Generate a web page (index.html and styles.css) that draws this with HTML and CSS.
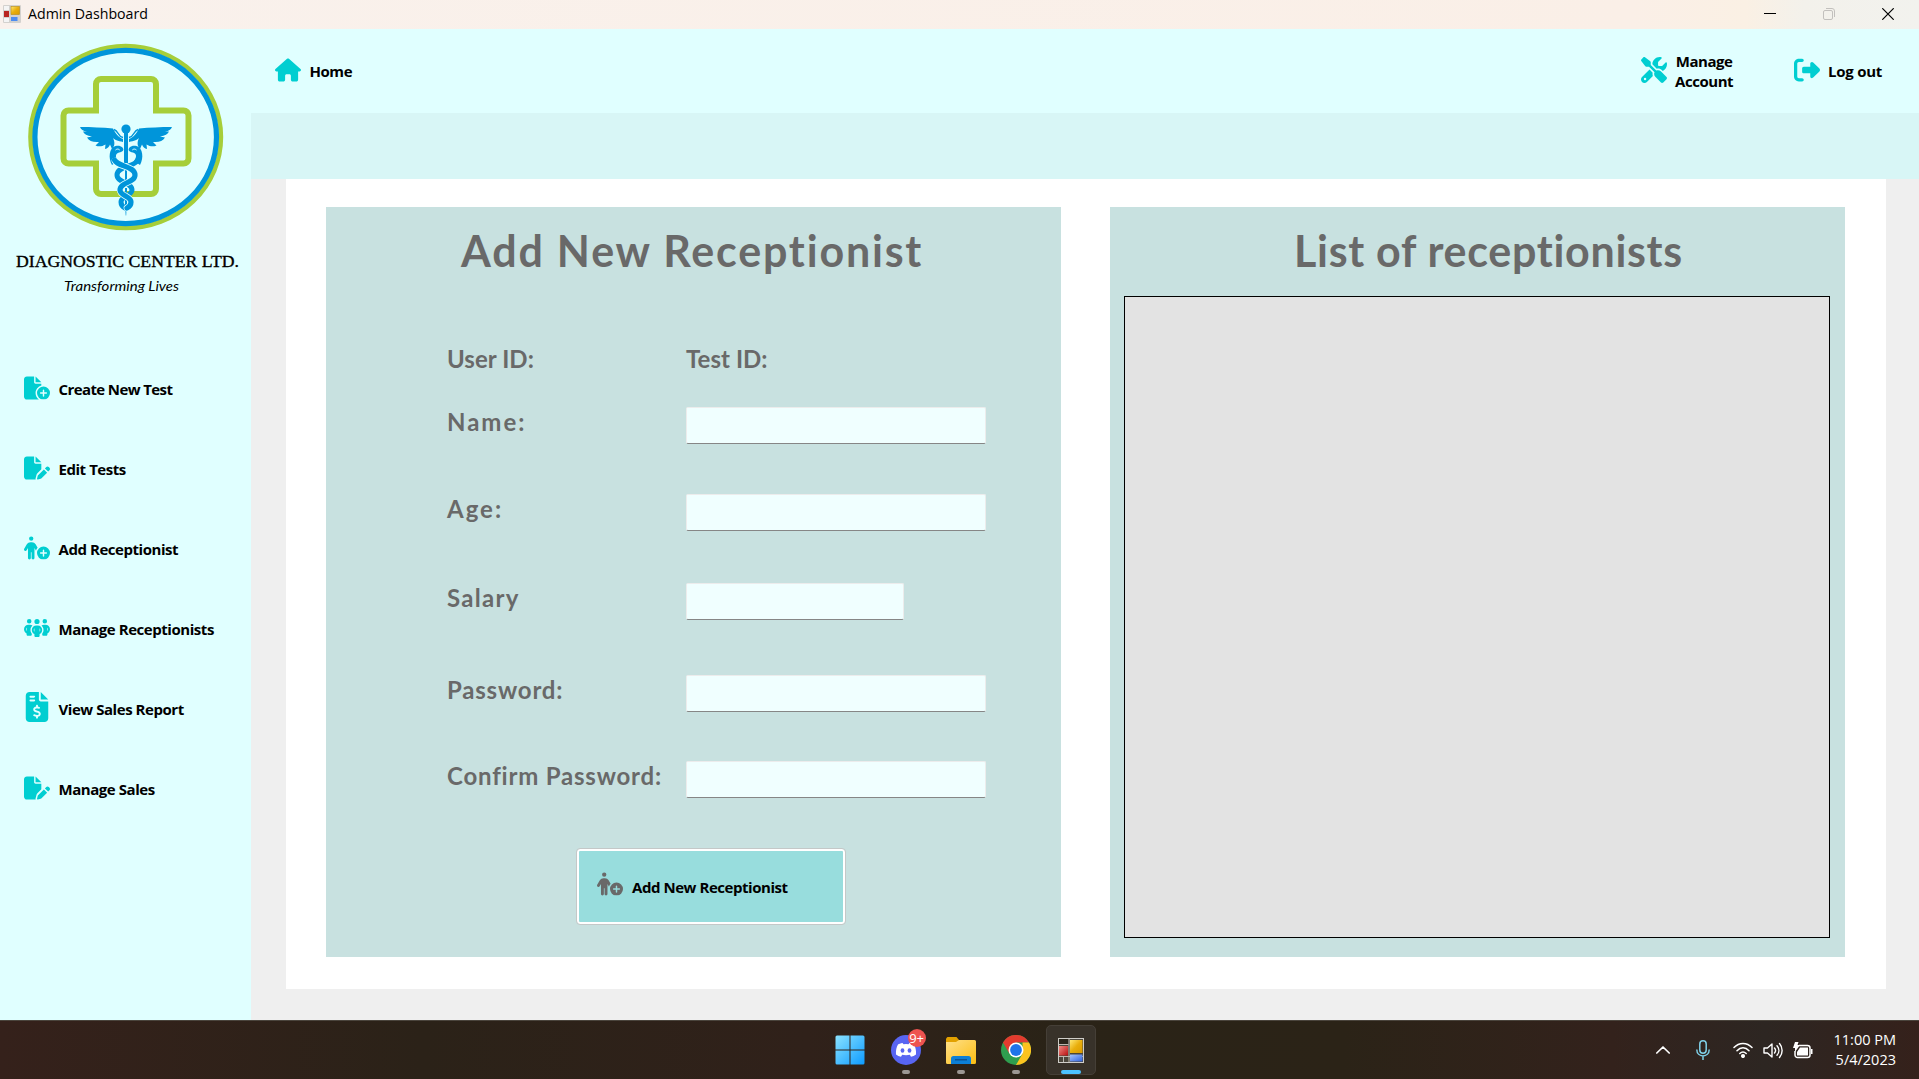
FILE: index.html
```html
<!DOCTYPE html>
<html lang="en">
<head>
<meta charset="utf-8">
<title>Admin Dashboard</title>
<link rel="stylesheet" href="styles.css">
</head>
<body>
<svg class="defs" width="0" height="0">
  <defs>
    <symbol id="i-plus-badge" viewBox="0 0 576 512"><path d="M432 224a144 144 0 1 1 0 288 144 144 0 1 1 0-288zm16 80c0-8.8-7.2-16-16-16s-16 7.2-16 16v48H368c-8.8 0-16 7.2-16 16s7.2 16 16 16h48v48c0 8.8 7.2 16 16 16s16-7.2 16-16V384h48c8.8 0 16-7.2 16-16s-7.2-16-16-16H448V304z"/></symbol>
    <symbol id="i-file-plus" viewBox="0 0 576 512"><path d="M0 64C0 28.7 28.7 0 64 0H224V128c0 17.7 14.3 32 32 32H384v38.6C310.1 219.5 256 287.4 256 368c0 59.1 29.1 111.3 73.7 143.3c-3.2 .5-6.4 .7-9.7 .7H64c-35.3 0-64-28.7-64-64V64zm384 64H256V0L384 128z"/><use href="#i-plus-badge" width="576" height="512"/></symbol>
    <symbol id="i-file-pen" viewBox="0 0 576 512"><path d="M0 64C0 28.7 28.7 0 64 0H224V128c0 17.7 14.3 32 32 32H384V285.7l-86.8 86.8c-10.3 10.3-17.5 23.1-21 37.2l-18.7 74.9c-2.3 9.2-1.8 18.8 1.3 27.5H64c-35.3 0-64-28.7-64-64V64zm384 64H256V0L384 128zM549.8 235.7l14.4 14.4c15.6 15.6 15.6 40.9 0 56.6l-29.4 29.4-71-71 29.4-29.4c15.6-15.6 40.9-15.6 56.6 0zM311.9 417L441.1 287.8l71 71L382.9 487.9c-4.1 4.1-9.2 7-14.9 8.4l-60.1 15c-5.5 1.4-11.2-.2-15.2-4.2s-5.6-9.7-4.2-15.2l15-60.1c1.4-5.6 4.3-10.8 8.4-14.9z"/></symbol>
    <symbol id="i-person-plus" viewBox="0 0 576 512"><path d="M112 48a48 48 0 1 1 96 0 48 48 0 1 1 -96 0zm40 304V480c0 17.7-14.3 32-32 32s-32-14.3-32-32V256.9L59.4 304.5c-9.1 15.1-28.8 20-43.9 10.9s-20-28.8-10.9-43.9l58.3-97c17.4-28.9 48.6-46.6 82.3-46.6h29.7c33.7 0 64.9 17.7 82.3 46.6l44.9 74.7c-16.1 17.6-28.6 38.5-36.6 61.5c-1.9-1.8-3.5-3.9-4.9-6.3L232 256.9V480c0 17.7-14.3 32-32 32s-32-14.3-32-32V352H152z"/><use href="#i-plus-badge" width="576" height="512"/></symbol>
    <symbol id="i-people" viewBox="0 0 640 512"><path d="M72 88a56 56 0 1 1 112 0 56 56 0 1 1 -112 0zM64 245.700C54 256.900 48 271.800 48 288s6 31.100 16 42.300V245.700zm144.400-49.300C178.700 222.700 160 261.200 160 304c0 34.300 12 65.800 32 90.500V416c0 17.700-14.300 32-32 32H96c-17.700 0-32-14.300-32-32V389.200C26.200 371.200 0 332.700 0 288c0-61.900 50.100-112 112-112h32c24 0 46.200 7.500 64.400 20.300zM448 416V394.500c20-24.700 32-56.200 32-90.500c0-42.800-18.700-81.300-48.400-107.700C449.800 183.500 472 176 496 176h32c61.900 0 112 50.100 112 112c0 44.700-26.200 83.200-64 101.200V416c0 17.700-14.300 32-32 32H480c-17.700 0-32-14.300-32-32zm8-328a56 56 0 1 1 112 0 56 56 0 1 1 -112 0zM576 245.700v84.700c10-11.300 16-26.100 16-42.300s-6-31.100-16-42.300zM320 32a64 64 0 1 1 0 128 64 64 0 1 1 0-128zM240 304c0 16.200 6 31 16 42.300V261.700c-10 11.300-16 26.100-16 42.300zm144-42.300v84.700c10-11.300 16-26.100 16-42.300s-6-31.100-16-42.300zM448 304c0 44.700-26.200 83.200-64 101.200V448c0 17.700-14.300 32-32 32H288c-17.700 0-32-14.300-32-32V405.200c-37.800-18-64-56.500-64-101.200c0-61.900 50.100-112 112-112h32c61.900 0 112 50.100 112 112z"/></symbol>
    <symbol id="i-invoice" viewBox="0 0 384 512"><path d="M64 0C28.700 0 0 28.700 0 64V448c0 35.300 28.700 64 64 64H320c35.300 0 64-28.700 64-64V160H256c-17.700 0-32-14.300-32-32V0H64zM256 0V128H384L256 0zM64 80c0-8.800 7.200-16 16-16h64c8.800 0 16 7.200 16 16s-7.200 16-16 16H80c-8.800 0-16-7.200-16-16zm0 64c0-8.800 7.200-16 16-16h64c8.800 0 16 7.200 16 16s-7.200 16-16 16H80c-8.800 0-16-7.200-16-16zm128 72c8.800 0 16 7.200 16 16v17.300c8.500 1.200 16.700 3.100 24.100 5.100c8.500 2.300 13.600 11 11.300 19.600s-11 13.600-19.600 11.300c-11.100-3-22-5.200-32.100-5.300c-8.400-.1-17.400 1.800-23.600 5.500c-5.700 3.400-8.100 7.300-8.100 12.800c0 3.700 1.300 6.500 7.300 10.100c6.900 4.100 16.600 7.100 29.200 10.900l.5 .1c11.300 3.400 25.300 7.600 36.300 14.600c12.100 7.600 22.400 19.700 22.700 38.200c.3 19.300-9.600 33.300-22.900 41.600c-7.700 4.800-16.400 7.600-25.100 9.100V440c0 8.800-7.200 16-16 16s-16-7.200-16-16V422.200c-11.200-2.100-21.700-5.700-30.900-8.900c-2.100-.7-4.200-1.400-6.200-2.100c-8.400-2.800-12.900-11.900-10.100-20.200s11.900-12.900 20.200-10.100c2.500 .8 4.800 1.600 7.100 2.400c13.600 4.600 24.600 8.400 36.300 8.700c9.100 .3 17.900-1.700 23.700-5.300c5.100-3.200 7.900-7.300 7.800-14c-.1-4.600-1.800-7.800-7.700-11.600c-6.800-4.300-16.500-7.400-29-11.200l-1.600-.5c-11-3.300-24.300-7.300-34.800-13.700c-12-7.200-22.600-18.900-22.700-37.300c-.1-19.400 10.800-32.800 23.800-40.500c7.500-4.400 15.800-7.200 24.100-8.700V232c0-8.800 7.200-16 16-16z"/></symbol>
    <symbol id="i-home" viewBox="0 0 576 512"><path d="M575.8 255.5c0 18-15 32.100-32 32.100h-32l.7 160.200c0 2.700-.2 5.400-.5 8.100V472c0 22.100-17.900 40-40 40H392c-22.100 0-40-17.900-40-40V384c0-17.700-14.300-32-32-32H256c-17.700 0-32 14.300-32 32v88c0 22.100-17.900 40-40 40H104c-22.100 0-40-17.900-40-40V287.600H32c-18 0-32-14-32-32.100c0-9 3-17 10-24L266.400 8c7-7 15-8 22-8s15 2 21 7L564.800 231.500c8 7 12 15 11 24z"/></symbol>
    <symbol id="i-tools" viewBox="0 0 512 512"><path d="M78.600 5C69.100-2.400 55.600-1.500 47 7L7 47c-8.500 8.500-9.400 22-2.100 31.600l80 104c4.500 5.900 11.600 9.400 19 9.400h54.100l109 109c-14.700 29-10 65.400 14.300 89.600l112 112c12.500 12.500 32.800 12.500 45.300 0l64-64c12.500-12.500 12.500-32.800 0-45.300l-112-112c-24.200-24.200-60.600-29-89.600-14.300l-109-109V104c0-7.500-3.500-14.500-9.400-19L78.600 5zM19.900 396.100C7.200 408.800 0 426.100 0 444.100C0 481.600 30.400 512 67.900 512c18 0 35.300-7.200 48-19.900L233.700 374.300c-7.800-20.900-9-43.600-3.600-65.100l-61.700-61.700L19.900 396.100zM512 144c0-10.500-1.100-20.700-3.200-30.500c-2.400-11.200-16.100-14.100-24.200-6l-63.900 63.900c-3 3-7.100 4.700-11.300 4.700H352c-8.800 0-16-7.200-16-16V102.600c0-4.200 1.700-8.300 4.700-11.300l63.900-63.900c8.100-8.100 5.200-21.800-6-24.200C388.700 1.100 378.500 0 368 0C288.500 0 224 64.500 224 144l0 .8 85.300 85.300c36-9.100 75.800 .5 104 28.700L429 274.500c49-23 83-72.800 83-130.500zM56 432a24 24 0 1 1 48 0 24 24 0 1 1 -48 0z"/></symbol>
    <symbol id="i-exit" viewBox="0 0 512 512"><path d="M377.900 105.900L500.700 228.700c7.200 7.200 11.300 17.100 11.300 27.300s-4.100 20.100-11.300 27.300L377.900 406.100c-6.400 6.400-15 9.900-24 9.900c-18.700 0-33.900-15.200-33.900-33.900l0-62.100-128 0c-17.700 0-32-14.300-32-32l0-64c0-17.700 14.300-32 32-32l128 0 0-62.100c0-18.700 15.200-33.900 33.900-33.900c9 0 17.600 3.600 24 9.900zM160 96L96 96c-17.700 0-32 14.300-32 32l0 256c0 17.700 14.300 32 32 32l64 0c17.700 0 32 14.300 32 32s-14.300 32-32 32l-64 0c-53 0-96-43-96-96L0 128C0 75 43 32 96 32l64 0c17.700 0 32 14.300 32 32s-14.300 32-32 32z"/></symbol>
    <linearGradient id="g-win" x1="0" y1="0" x2="1" y2="1"><stop offset="0" stop-color="#8be3ff"/><stop offset="1" stop-color="#0d9bff"/></linearGradient>
    <linearGradient id="g-folder" x1="0" y1="0" x2="1" y2="1"><stop offset="0" stop-color="#ffe08a"/><stop offset="1" stop-color="#fbbd12"/></linearGradient>
    <linearGradient id="g-yellow" x1="0" y1="0" x2="1" y2="1"><stop offset="0" stop-color="#ffe873"/><stop offset=".5" stop-color="#e9ae0c"/><stop offset="1" stop-color="#d99a00"/></linearGradient>
    <linearGradient id="g-red" x1="0" y1="0" x2="1" y2="1"><stop offset="0" stop-color="#f08b84"/><stop offset="1" stop-color="#b80f10"/></linearGradient>
    <linearGradient id="g-blue" x1="0" y1="0" x2="1" y2="1"><stop offset="0" stop-color="#a5c3ff"/><stop offset="1" stop-color="#2f62dc"/></linearGradient>
  </defs>
</svg>

<header class="titlebar">
  <svg class="app-icon" viewBox="0 0 18 18"><rect width="18" height="18" rx="1" fill="#d3d1ce"/><rect x="1" y="1" width="5" height="4" fill="#f4f4f4"/><rect x="1" y="13" width="5" height="4" fill="#f4f4f4"/><rect x="8" y="1.500" width="8.500" height="8" fill="url(#g-yellow)" stroke="#b98a10" stroke-width=".6"/><rect x="1" y="6" width="5" height="6" fill="#b8231f"/><rect x="8" y="12" width="6.500" height="4" fill="#4d8cf0"/></svg>
  <span class="title">Admin Dashboard</span>
  <div class="controls">
    <svg width="12" height="12" viewBox="0 0 12 12"><path d="M0 5.500h12" stroke="#000"/></svg>
    <svg width="12" height="12" viewBox="0 0 12 12" fill="none" stroke="#c2c0bd"><rect x=".5" y="2.500" width="9" height="9" rx="1.500"/><path d="M3 .5h6a2.500 2.500 0 0 1 2.500 2.500v6"/></svg>
    <svg width="12" height="12" viewBox="0 0 12 12"><path d="M.3.300l11.400 11.400M11.700.300L.3 11.700" stroke="#000" stroke-width="1.200"/></svg>
  </div>
</header>

<div class="app">
  <aside class="sidebar">
    <svg class="logo" viewBox="0 29 251 275" width="251" height="275">
      <ellipse cx="125.700" cy="137" rx="95.200" ry="91" fill="none" stroke="#a6ce39" stroke-width="4.600"/>
      <ellipse cx="125.700" cy="137" rx="90.800" ry="86.600" fill="none" stroke="#0095da" stroke-width="5.200"/>
      <path d="M96 110.500V84a5 5 0 0 1 5-5h50a5 5 0 0 1 5 5v26.500h27.500a5 5 0 0 1 5 5v43a5 5 0 0 1-5 5H156V189a5 5 0 0 1-5 5h-50a5 5 0 0 1-5-5v-25.500H68.500a5 5 0 0 1-5-5v-43a5 5 0 0 1 5-5z" fill="none" stroke="#a6ce39" stroke-width="6"/>
      <defs>
        <g id="wing">
          <path fill="#0095da" d="M80 127C92 127 102 127.500 113 128.500C116 134 118 137 123 139V142C118 141 114 139.500 113 138C115 142 115 146 112 149L110 144.500C109 147 107.500 148.500 105 149L105.500 144.500C102 146.500 99 147 95.500 145.500L99 142C93 142.500 89 141 87 137.500L92 136.500C87 136 84 134 83 131.500H87C83 131 81 129.500 80 127Z"/>
          <path d="M114 129.500C119 131 117 136 123 137.500" fill="none" stroke="#0095da" stroke-width="1.500"/>
        </g>
        <g id="snake-head">
          <path d="M115.500 146C109 148 108 158 112 165L118 161C114.500 156 116 153.500 119 152.500C123 152 124.500 150 122.500 147.500C120.500 145.500 118 145.300 115.500 146Z" fill="#0095da"/>
          <path d="M115.500 150c1.500-1.300 3-1.200 4.200 0" stroke="#e0ffff" fill="none"/>
        </g>
      </defs>
      <use href="#wing"/>
      <use href="#wing" transform="translate(252 0) scale(-1 1)"/>
      <rect x="124" y="133" width="4" height="30" fill="#0095da"/>
      <path d="M125 170h2v12h-2zM125 188h2v7h-2zM125 199h2v7h-2zM125.300 209h1.200l-.3 6.500h-.5z" fill="#0095da"/>
      <circle cx="126" cy="129" r="4.600" fill="#0095da"/>
      <use href="#snake-head"/>
      <use href="#snake-head" transform="translate(252 0) scale(-1 1)"/>
      <g fill="none" stroke-linecap="round">
        <path d="M137 161C134 167 117 166 117 175C117 183 132 182 132 190C132 196 121 196 121 202Q121 206 125 208" stroke="#0095da" stroke-width="5"/>
        <path d="M115 161C118 167 135 166 135 175C135 183 120 182 120 190C120 196 131 196 131 202Q131 206 127 208" stroke="#e0ffff" stroke-width="6.600"/>
        <path d="M114.500 160C118 167 135 166 135 175C135 183 120 182 120 190C120 196 131 196 131 202Q131 206 127 208" stroke="#0095da" stroke-width="5.200"/>
      </g>
      <text class="brand" x="16" y="267" textLength="223" lengthAdjust="spacingAndGlyphs">DIAGNOSTIC CENTER LTD.</text>
      <text class="tagline" x="64" y="291" textLength="115" lengthAdjust="spacingAndGlyphs">Transforming Lives</text>
    </svg>
    <nav class="menu">
      <a class="item create"><svg class="icon"><use href="#i-file-plus"/></svg>Create New Test</a>
      <a class="item"><svg class="icon"><use href="#i-file-pen"/></svg>Edit Tests</a>
      <a class="item"><svg class="icon"><use href="#i-person-plus"/></svg>Add Receptionist</a>
      <a class="item"><svg class="icon"><use href="#i-people"/></svg>Manage Receptionists</a>
      <a class="item"><svg class="icon tall"><use href="#i-invoice"/></svg>View Sales Report</a>
      <a class="item"><svg class="icon"><use href="#i-file-pen"/></svg>Manage Sales</a>
    </nav>
  </aside>

  <div class="main">
    <div class="topbar">
      <a class="link home"><svg class="icon"><use href="#i-home"/></svg>Home</a>
      <a class="link account"><svg class="icon"><use href="#i-tools"/></svg><span>Manage<br>Account</span></a>
      <a class="link logout"><svg class="icon"><use href="#i-exit"/></svg>Log out</a>
    </div>
    <div class="subbar"></div>
    <main class="panel">
      <section class="card">
        <h1 class="h-add">Add New Receptionist</h1>
        <form class="form">
          <div class="row ids"><label>User ID:</label><label>Test ID:</label></div>
          <div class="row name"><label>Name:</label><input></div>
          <div class="row age"><label>Age:</label><input></div>
          <div class="row salary"><label>Salary</label><input></div>
          <div class="row pass"><label>Password:</label><input></div>
          <div class="row confirm"><label>Confirm Password:</label><input></div>
          <button type="button" class="submit"><svg class="icon"><use href="#i-person-plus"/></svg>Add New Receptionist</button>
        </form>
      </section>
      <section class="card list">
        <h1 class="h-list">List of receptionists</h1>
        <div class="table"></div>
      </section>
    </main>
  </div>
</div>

<footer class="taskbar">
  <div class="apps">
    <div class="task"><svg width="30" height="30" viewBox="0 0 30 30"><path fill="url(#g-win)" d="M2 .500h12.500v14H.500V2A1.500 1.500 0 0 1 2 .500zM15.500.500H28A1.500 1.500 0 0 1 29.500 2v12.500h-14zM.500 15.500h14v14H2A1.500 1.500 0 0 1 .500 28zM15.500 15.500h14V28a1.500 1.500 0 0 1-1.500 1.500H15.500z"/></svg></div>
    <div class="task running"><svg width="30" height="30" viewBox="0 0 30 30"><circle cx="15" cy="15" r="15" fill="#5865f2"/><path fill="#fff" d="M11.500 8l1 1.200a18 18 0 0 1 5 0l1-1.200c2 .3 3.500.900 4.500 1.500 1.500 2.500 2.300 6 2 10a14 14 0 0 1-5 2.300l-1.200-2c-2 .500-5.500.500-7.600 0l-1.200 2a14 14 0 0 1-5-2.300c-.3-4 .5-7.500 2-10 1-.6 2.500-1.200 4.500-1.500z"/><ellipse cx="11.500" cy="15.500" rx="1.900" ry="2.200" fill="#5865f2"/><ellipse cx="18.500" cy="15.500" rx="1.900" ry="2.200" fill="#5865f2"/></svg><span class="badge">9+</span></div>
    <div class="task running"><svg width="30" height="30" viewBox="0 0 30 30"><path fill="#e2a100" d="M1.500 2h9l2.500 3v3H0V3.500z"/><path fill="url(#g-folder)" d="M0 7h10l3-2h15.500A1.500 1.500 0 0 1 30 6.500v21a1.500 1.500 0 0 1-1.500 1.500h-27A1.500 1.500 0 0 1 0 27.500z"/><path fill="#0c7fd6" d="M5 29v-5.500A2.500 2.500 0 0 1 7.500 21h15a2.500 2.500 0 0 1 2.500 2.500V29z"/><path d="M9 24.800h12" stroke="#0a4a86" stroke-width="1.200"/></svg></div>
    <div class="task running"><svg width="30" height="30" viewBox="0 0 30 30"><circle cx="15" cy="15" r="15" fill="#2f9e4f"/><path fill="#e33b2e" d="M2 7.500A15 15 0 0 1 28 7.500H15L8.500 18.700z"/><path fill="#fcc31e" d="M28 7.500A15 15 0 0 1 15 30l6.500-11.200L21.500 7.500z"/><circle cx="15" cy="15" r="7.500" fill="#fff"/><circle cx="15" cy="15" r="5.900" fill="#1f74ea"/></svg></div>
    <div class="task active"><svg width="26" height="25" viewBox="0 0 26 25"><rect x=".5" y=".5" width="25" height="24" fill="#4a463c" stroke="#cfcdc8"/><rect x="1" y="1" width="9.500" height="5" fill="#29251b"/><path d="M1 6.500h9.500M1 18.500h24M11 1v23M5.500 18.500V24" stroke="#bbb8b0"/><rect x="12" y="2" width="12.500" height="13" fill="url(#g-yellow)"/><rect x="1" y="8" width="9" height="9.500" fill="url(#g-red)"/><rect x="12" y="16.500" width="12.500" height="7" fill="url(#g-blue)"/></svg></div>
  </div>
  <div class="tray">
    <svg class="chev" width="14" height="8" viewBox="0 0 14 8" fill="none" stroke="#fff" stroke-width="1.700"><path d="M.8 7L7 1l6.200 6" stroke-linecap="round" stroke-linejoin="round"/></svg>
    <svg class="mic" width="14" height="20" viewBox="0 0 14 20" fill="none" stroke="#7fd0e8" stroke-width="1.500"><rect x="3.800" y=".8" width="6.400" height="12.500" rx="3.200"/><path d="M.8 9.500c0 8.500 12.400 8.500 12.400 0M7 16v4"/></svg>
    <svg class="wifi" width="20" height="16" viewBox="0 0 20 16" fill="none" stroke="#fff" stroke-width="1.500" stroke-linecap="round"><path d="M1 5.500c5-5.500 13-5.500 18 0M4 8.700c3.500-3.800 8.500-3.800 12 0M6.800 11.500c2-2 4.400-2 6.400 0"/><circle cx="10" cy="14" r="1.300" fill="#fff"/></svg>
    <svg class="vol" width="20" height="17" viewBox="0 0 20 17" fill="none" stroke="#fff" stroke-width="1.400" stroke-linecap="round" stroke-linejoin="round"><path d="M1 6h3.500L9 2v13l-4.500-4H1zM11.500 6c1.300 1.500 1.300 3.500 0 5M14 3.800c2.500 2.800 2.500 6.600 0 9.400M16.500 1.500c3.500 4 3.500 10 0 14"/></svg>
    <svg class="bat" width="20" height="17" viewBox="0 0 20 17"><path d="M6 3.500h8.500a2.500 2.500 0 0 1 2.500 2.500v7a2.500 2.500 0 0 1-2.500 2.500H4.500A2.500 2.500 0 0 1 2 13V9" fill="none" stroke="#fff" stroke-width="1.500"/><path d="M7 5.500h8v8H4V10zM18 7h1.500v5H18zM2 0h3.500l-1 3H7L2 10V6H0z" fill="#fff"/></svg>
    <div class="clock"><span class="time">11:00 PM</span><span class="date">5/4/2023</span></div>
  </div>
</footer>
</body>
</html>
```

FILE: styles.css
```css
* { box-sizing: border-box; }

body {
  margin: 0;
  width: 1919px;
  height: 1079px;
  overflow: hidden;
  display: flex;
  flex-direction: column;
  font-family: "Open Sans", "Noto Sans", sans-serif;
  background: #efefef;
  color: #000;
}

.defs { display: block; position: absolute; }

.titlebar {
  height: 29px;
  display: flex;
  align-items: center;
  padding: 0 25px 0 3px;
  background: linear-gradient(90deg, #f9f1ec 0, #faefe7 85%, #faf0e4 91%, #f3f1eb 94%, #f2f2ee 100%);
}
.app-icon { width: 18px; height: 18px; margin-top: -1px; }
.title { font-size: 14.200px; margin: -1px 0 0 7px; line-height: 28px; }
.controls { margin-left: auto; display: flex; gap: 47px; margin-top: -1px; }

.app { flex: 1; display: flex; min-height: 0; }

.sidebar { width: 251px; background: #e0ffff; }
.logo { display: block; }
.brand { font: 16.500px "Liberation Serif", serif; stroke: #000; stroke-width: .35px; }
.tagline { font: italic 14px "Lato", sans-serif; }

.menu { display: flex; flex-direction: column; margin-top: 45px; }
.item {
  height: 80px;
  display: flex;
  align-items: center;
  gap: 9px;
  padding-left: 23.500px;
}
.item, .link, .submit {
  font-size: 15px;
  font-weight: 700;
  letter-spacing: -0.450px;
  line-height: 20px;
  white-space: nowrap;
}
.item.create { letter-spacing: -0.600px; }
.icon {
  width: 26px;
  height: 26px;
  flex: none;
  fill: #00ced1;
  margin-top: -2px;
}
.icon.tall { height: 30px; margin-top: -4px; position: relative; left: .5px; }

.main { flex: 1; display: flex; flex-direction: column; }
.topbar {
  height: 84px;
  display: flex;
  align-items: center;
  padding: 0 36px 0 23.500px;
  background: #e0ffff;
}
.link { display: flex; align-items: center; gap: 9px; }
.account { margin-left: auto; text-align: center; gap: 8px; }
.account, .logout { width: 153px; }
.link.logout { width: 89px; gap: 8px; letter-spacing: -0.250px; }
.subbar { height: 66px; background: #d8f6f6; }

.panel {
  margin: 0 33px 0 35px;
  height: 810px;
  padding: 28px 41px 32px 40px;
  display: flex;
  justify-content: space-between;
  background: #fff;
}
.card {
  width: 735px;
  display: flex;
  flex-direction: column;
  background: #c8e1e0;
  color: #696969;
  font-family: "Century Gothic", "Lato", sans-serif;
}
h1 {
  margin: 16px 0 0;
  height: 55px;
  font-size: 43px;
  line-height: 55px;
  font-weight: 700;
  white-space: nowrap;
}
.h-add { padding-left: 135px; letter-spacing: 1.800px; }
.h-list { padding-left: 184px; letter-spacing: .7px; }

.form { display: flex; flex-direction: column; padding: 66px 0 0 121px; }
.row { display: flex; height: 37px; align-items: flex-start; }
.row label {
  width: 239px;
  font-size: 24px;
  line-height: 29px;
  font-weight: 700;
  letter-spacing: .8px;
  white-space: nowrap;
}
.row.ids label { letter-spacing: .05px; }
.row.name label { letter-spacing: 2px; }
.row.age label { letter-spacing: 2px; }
.row.salary label { letter-spacing: 1.300px; }
.name { margin-top: 26px; }
.age { margin-top: 50px; }
.salary { margin-top: 52px; }
.pass { margin-top: 55px; }
.confirm { margin-top: 49px; }
.row input {
  width: 300px;
  height: 37px;
  padding: 0 6px;
  border: 1px solid #ececec;
  border-bottom-color: #868686;
  border-radius: 2px;
  background: #f0ffff;
}
.row.salary input { width: 218px; }

.submit {
  margin: 51px 0 0 130px;
  width: 268px;
  height: 75px;
  display: flex;
  align-items: center;
  gap: 9px;
  padding: 0 0 0 18px;
  border: 2px solid #fff;
  border-radius: 3px;
  outline: 1px solid #c4c8c8;
  background: #98dddd;
  color: #000;
  font-family: "Open Sans", "Noto Sans", sans-serif;
}
.submit .icon { fill: #696969; margin-top: -5px; }

.table {
  margin: 18px 0 0 14px;
  width: 706px;
  height: 642px;
  border: 1px solid #000;
  background: #e3e3e3;
}

.taskbar {
  height: 59px;
  display: flex;
  align-items: center;
  border-top: 1px solid #4a443c;
  background: linear-gradient(90deg, #35211b 0, #2b2218 22%, #30211a 42%, #2a2317 55%, #2b2317 70%, #33221c 84%, #2d2622 92%, #35211b 100%);
  color: #fff;
}
.apps { display: flex; gap: 5px; margin-left: 825.500px; }
.task {
  position: relative;
  width: 50px;
  height: 50px;
  display: flex;
  align-items: center;
  justify-content: center;
  border-radius: 5px;
}
.task:first-child { margin-right: 1px; margin-left: -1px; }
.task::after {
  position: absolute;
  left: 21px;
  bottom: 1px;
  height: 4px;
  width: 8px;
  border-radius: 2px;
}
.running::after { content: ""; background: #9c9793; }
.active { background: #38322a; border: 1px solid #453f37; }
.active::after { content: ""; left: 14px; bottom: 0; width: 20px; background: #4cc2ff; }
.badge {
  position: absolute;
  left: 27px;
  top: 4px;
  width: 18px;
  height: 18px;
  border-radius: 9px;
  background: #ee5350;
  font-size: 13px;
  letter-spacing: -0.3px;
  line-height: 18px;
  text-align: center;
}
.tray { margin-left: auto; display: flex; align-items: center; padding-right: 23px; }
.mic { margin-left: 26px; }
.wifi { margin-left: 23px; }
.vol { margin-left: 10px; }
.bat { margin-left: 10px; }
.clock {
  width: 83px;
  margin-top: -1px;
  display: flex;
  flex-direction: column;
  align-items: flex-end;
  font-size: 14.500px;
  line-height: 20px;
}
```
